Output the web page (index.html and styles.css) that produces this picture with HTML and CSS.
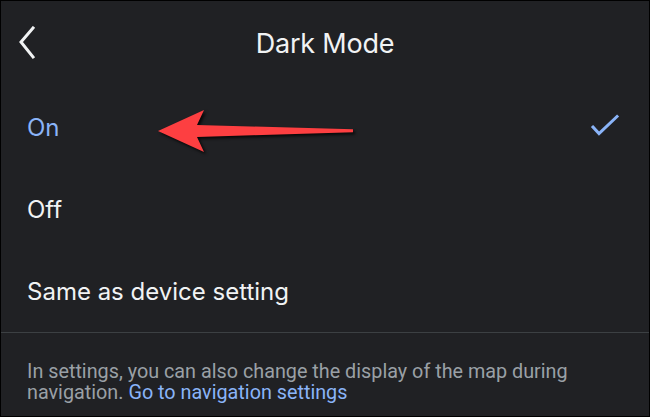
FILE: index.html
```html
<!DOCTYPE html>
<html>
<head>
<meta charset="utf-8">
<link rel="stylesheet" href="styles.css">
</head>
<body>
<div class="screen">
  <header class="topbar">
    <svg class="back" width="20" height="34" viewBox="0 0 20 34"><polyline points="15,2 3,16 15,31" fill="none" stroke="#f1f3f4" stroke-width="3" stroke-linecap="square"/></svg>
    <h1 class="title">Dark Mode</h1>
    <span class="spacer"></span>
  </header>
  <ul class="options">
    <li class="option selected"><span>On</span>
      <svg class="check" width="30" height="24" viewBox="0 0 30 24"><polyline points="3,13 9,19.5 27,2.5" fill="none" stroke="#8ab4f8" stroke-width="3" stroke-linecap="square"/></svg>
    </li>
    <li class="option"><span>Off</span></li>
    <li class="option"><span>Same as device setting</span></li>
  </ul>
  <p class="note">In settings, you can also change the display of the map during navigation. <a class="link">Go to navigation settings</a></p>
  <svg class="arrow" width="220" height="70" viewBox="150 100 220 70"><polygon points="158,131 204,110 197,125 353,129.3 353,132.3 197,137 204,152" fill="#fd3f41"/></svg>
</div>
</body>
</html>
```
FILE: styles.css
```css
html, body { margin: 0; padding: 0; }
body { background: #000; }
.screen {
  position: relative;
  width: 650px;
  height: 417px;
  box-sizing: border-box;
  border: 1px solid #000;
  background: #202124;
  font-family: Inter, "Noto Sans", sans-serif;
  color: #f1f3f4;
  overflow: hidden;
}
.topbar {
  display: grid;
  grid-template-columns: 60px 1fr 60px;
  align-items: center;
  height: 85px;
}
.back { justify-self: start; margin-left: 17px; margin-top: -1px; }
.title {
  margin: 0;
  text-align: center;
  font-weight: 400;
  font-size: 27px;
  letter-spacing: -0.2px;
}
.options { list-style: none; margin: 0; padding: 0; border-bottom: 1px solid #3c4043; }
.option {
  display: flex;
  align-items: center;
  justify-content: space-between;
  height: 82px;
  padding: 0 29px 0 26px;
  font-size: 24px;
}
.option.selected { color: #8ab4f8; }
.check { margin-top: -3px; }
.note {
  margin: 28px 0 0;
  padding: 0 26px;
  font-family: Roboto, "Noto Sans", sans-serif;
  font-size: 19.8px;
  line-height: 21px;
  color: #9aa0a6;
}
.link { color: #8ab4f8; }
.arrow {
  position: absolute;
  left: 149px;
  top: 99px;
  filter: drop-shadow(2px 2px 1.5px rgba(0,0,0,0.8));
}
```
